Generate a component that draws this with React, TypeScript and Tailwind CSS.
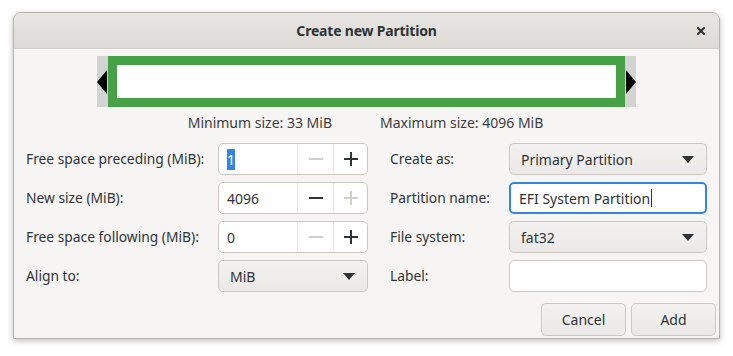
import React from 'react';

const font = { fontFamily: '"Noto Sans", "Open Sans", sans-serif' };

const Arrow = () => (
  <svg width="12" height="7" viewBox="0 0 12 7" className="shrink-0">
    <path d="M0 0 L12 0 L6 7 Z" fill="#2e3436" />
  </svg>
);

const Minus = ({ off }: { off?: boolean }) => (
  <svg width="16" height="16" viewBox="0 0 16 16">
    <rect x="1" y="7" width="14" height="2" fill={off ? '#d0cfcc' : '#2e3436'} />
  </svg>
);

const Plus = ({ off }: { off?: boolean }) => (
  <svg width="16" height="16" viewBox="0 0 16 16">
    <rect x="1" y="7" width="14" height="2" fill={off ? '#d0cfcc' : '#2e3436'} />
    <rect x="7" y="1" width="2" height="14" fill={off ? '#d0cfcc' : '#2e3436'} />
  </svg>
);

const Spin = ({ value, minusOff, plusOff, selected }: { value: string; minusOff?: boolean; plusOff?: boolean; selected?: boolean }) => (
  <div className="flex h-[32px] w-[150px] rounded-[5px] border border-[#cdc7c2] bg-white">
    <div className="flex flex-1 items-center pl-[8px] text-[14px] text-[#2e3436]">
      {selected ? <span className="bg-[#3584e4] text-white">{value}</span> : value}
    </div>
    <div className="flex w-[36px] items-center justify-center border-l border-[#e8e5e2]"><Minus off={minusOff} /></div>
    <div className="flex w-[34px] items-center justify-center border-l border-[#e8e5e2]"><Plus off={plusOff} /></div>
  </div>
);

const Combo = ({ value, w }: { value: string; w: string }) => (
  <div className={`flex h-[32px] ${w} items-center justify-between rounded-[5px] border border-[#cdc7c2] bg-gradient-to-b from-[#f4f2f1] to-[#ebe9e7] pl-[11px] pr-[12px] text-[14px] text-[#2e3436]`}>
    <span>{value}</span>
    <Arrow />
  </div>
);

const Label = ({ children, w }: { children: React.ReactNode; w: string }) => (
  <div className={`${w} flex h-[32px] items-center text-[13.8px] text-[#2e3436]`}>{children}</div>
);

export default function App() {
  return (
    <div className="h-[356px] w-[733px] bg-white pl-[13px] pt-[12px]" style={font}>
      <div className="flex h-[327px] w-[707px] flex-col overflow-hidden rounded-t-[8px] border border-[#b6b3b0] bg-[#f6f5f4] shadow-[0_2px_6px_rgba(0,0,0,0.25)]">
        {/* Title bar */}
        <div className="relative flex h-[36px] shrink-0 items-center justify-center border-b border-[#d5d0cc] bg-gradient-to-b from-[#e8e6e3] to-[#dedad6]">
          <span className="text-[14px] font-bold tracking-[-0.2px] text-[#2e3436]">Create new Partition</span>
          <svg className="absolute right-[14px] top-[14px]" width="8" height="8" viewBox="0 0 8 8">
            <path d="M1 1 L7 7 M7 1 L1 7" stroke="#2e3436" strokeWidth="2" strokeLinecap="square" />
          </svg>
        </div>

        {/* Partition bar */}
        <div className="mt-[7px] flex justify-center">
          <div className="relative flex h-[51px] w-[539px] items-center justify-center bg-[#d3d3d3]">
            <div className="h-[51px] w-[517px] bg-[#46a046] p-[9px]">
              <div className="h-full w-full bg-white" />
            </div>
            <svg className="absolute left-0 top-[14px]" width="10" height="24" viewBox="0 0 10 24"><path d="M10 0 L0 12 L10 24 Z" fill="#000" /></svg>
            <svg className="absolute right-0 top-[14px]" width="10" height="24" viewBox="0 0 10 24"><path d="M0 0 L10 12 L0 24 Z" fill="#000" /></svg>
          </div>
        </div>
        <div className="mt-[7px] flex justify-center gap-[48px] pr-[2px] text-[14px] leading-[18px] text-[#3d3d3d]">
          <span>Minimum size: 33 MiB</span>
          <span>Maximum size: 4096 MiB</span>
        </div>

        {/* Form */}
        <div className="mt-[11px] flex pl-[12px]">
          <div className="flex flex-col gap-[7px]">
            <div className="flex"><Label w="w-[192px]">Free space preceding (MiB):</Label><Spin value="1" minusOff selected /></div>
            <div className="flex"><Label w="w-[192px]">New size (MiB):</Label><Spin value="4096" plusOff /></div>
            <div className="flex"><Label w="w-[192px]">Free space following (MiB):</Label><Spin value="0" minusOff /></div>
            <div className="flex"><Label w="w-[192px]">Align to:</Label><Combo value="MiB" w="w-[150px]" /></div>
          </div>
          <div className="ml-[22px] flex flex-col gap-[7px]">
            <div className="flex"><Label w="w-[119px]">Create as:</Label><Combo value="Primary Partition" w="w-[198px]" /></div>
            <div className="flex">
              <Label w="w-[119px]">Partition name:</Label>
              <div className="flex h-[32px] w-[198px] items-center rounded-[5px] border-2 border-[#3584e4] bg-white pl-[8px] text-[14px] text-[#2e3436]">
                EFI System Partition<span className="ml-[1px] inline-block h-[18px] w-[1px] bg-[#2e3436]" />
              </div>
            </div>
            <div className="flex"><Label w="w-[119px]">File system:</Label><Combo value="fat32" w="w-[198px]" /></div>
            <div className="flex">
              <Label w="w-[119px]">Label:</Label>
              <div className="h-[32px] w-[198px] rounded-[5px] border border-[#cdc7c2] bg-white" />
            </div>
          </div>
        </div>

        {/* Buttons */}
        <div className="mt-[11px] flex justify-end gap-[5px] pr-[3px]">
          <div className="flex h-[33px] w-[85px] items-center justify-center rounded-[5px] border border-[#cdc7c2] bg-gradient-to-b from-[#f4f2f1] to-[#ebe9e7] text-[14px] text-[#2e3436]">Cancel</div>
          <div className="flex h-[33px] w-[85px] items-center justify-center rounded-[5px] border border-[#cdc7c2] bg-gradient-to-b from-[#f4f2f1] to-[#ebe9e7] text-[14px] text-[#2e3436]">Add</div>
        </div>
      </div>
    </div>
  );
}
